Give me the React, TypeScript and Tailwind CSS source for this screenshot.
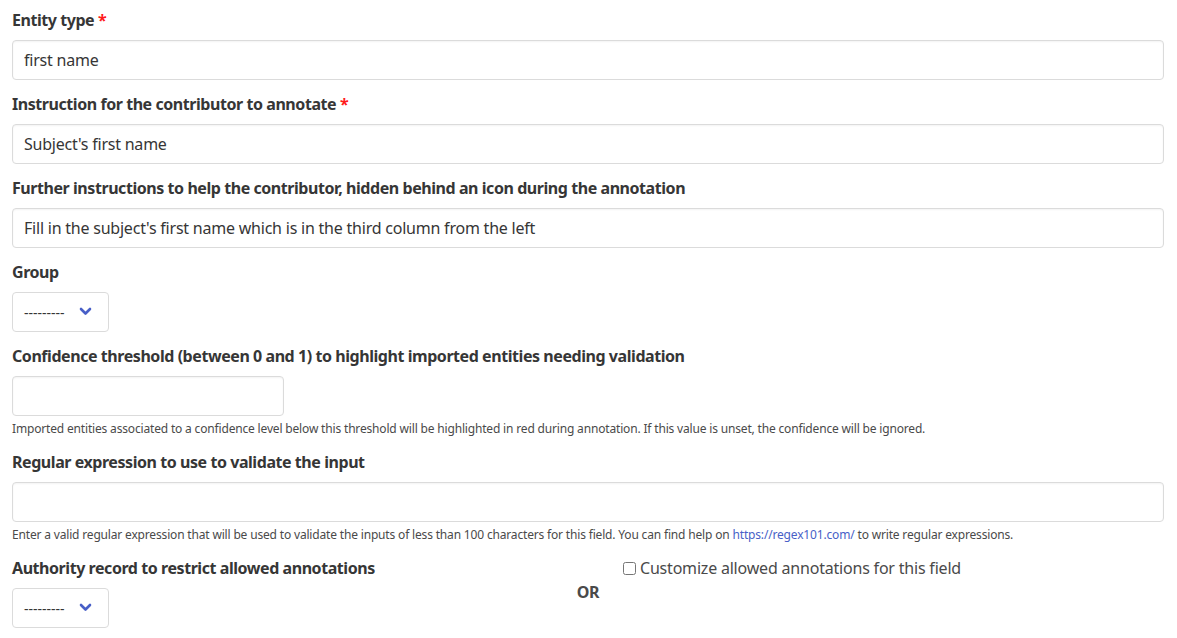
const font = { fontFamily: '"Noto Sans", "Open Sans", sans-serif' }

function Label({ text, required }: { text: string; required?: boolean }) {
  return (
    <label className="block mb-2 text-[16px] leading-6 font-bold tracking-[-0.44px] text-[#363636]">
      {text}
      {required && <span className="text-[#ff1a1a]"> *</span>}
    </label>
  )
}

function TextInput({ value, className = 'w-full' }: { value?: string; className?: string }) {
  return (
    <input
      readOnly
      value={value ?? ''}
      className={`${className} h-10 px-[11px] rounded-[4px] border border-[#dbdbdb] bg-white text-[16px] tracking-[-0.22px] text-[#363636] shadow-[inset_0_1px_2px_rgba(10,10,10,0.05)] outline-none`}
    />
  )
}

function Select() {
  return (
    <div className="relative w-[97px] h-10">
      <div className="w-full h-full rounded-[4px] border border-[#dbdbdb] bg-white flex items-center pl-[11px] text-[14px] text-[#363636]">
        ---------
      </div>
      <svg
        className="absolute right-[17px] top-[15px]"
        width="13"
        height="9"
        viewBox="0 0 13 9"
        fill="none"
        stroke="#485fc7"
        strokeWidth="2.6"
        strokeLinecap="round"
        strokeLinejoin="round"
      >
        <polyline points="2 2 6.5 6.5 11 2" />
      </svg>
    </div>
  )
}

function Help({ children }: { children: React.ReactNode }) {
  return <p className="mt-1 text-[12px] leading-[18px] tracking-[-0.17px] text-[#4a4a4a]">{children}</p>
}

export default function App() {
  return (
    <div className="bg-white min-h-screen pl-3 pr-[13px] pt-2" style={font}>
      <div className="mb-3">
        <Label text="Entity type" required />
        <TextInput value="first name" />
      </div>
      <div className="mb-3">
        <Label text="Instruction for the contributor to annotate" required />
        <TextInput value="Subject's first name" />
      </div>
      <div className="mb-3">
        <Label text="Further instructions to help the contributor, hidden behind an icon during the annotation" />
        <TextInput value="Fill in the subject's first name which is in the third column from the left" />
      </div>
      <div className="mb-3">
        <Label text="Group" />
        <Select />
      </div>
      <div className="mb-3">
        <Label text="Confidence threshold (between 0 and 1) to highlight imported entities needing validation" />
        <TextInput className="w-[272px]" />
        <Help>
          Imported entities associated to a confidence level below this threshold will be highlighted in red during
          annotation. If this value is unset, the confidence will be ignored.
        </Help>
      </div>
      <div className="mb-3">
        <Label text="Regular expression to use to validate the input" />
        <TextInput />
        <Help>
          Enter a valid regular expression that will be used to validate the inputs of less than 100 characters for
          this field. You can find help on <span className="text-[#485fc7]">https://regex101.com/</span> to write
          regular expressions.
        </Help>
      </div>
      <div className="flex">
        <div className="w-[553px]">
          <Label text="Authority record to restrict allowed annotations" />
          <Select />
        </div>
        <div className="w-[46px] flex items-center justify-center">
          <span className="text-[16px] font-bold tracking-[-0.3px] text-[#4a4a4a]">OR</span>
        </div>
        <div className="pl-[12px]">
          <label className="flex items-center gap-1 text-[16px] leading-6 tracking-[-0.2px] text-[#4a4a4a]">
            <input type="checkbox" className="w-[13px] h-[13px]" />
            Customize allowed annotations for this field
          </label>
        </div>
      </div>
    </div>
  )
}
